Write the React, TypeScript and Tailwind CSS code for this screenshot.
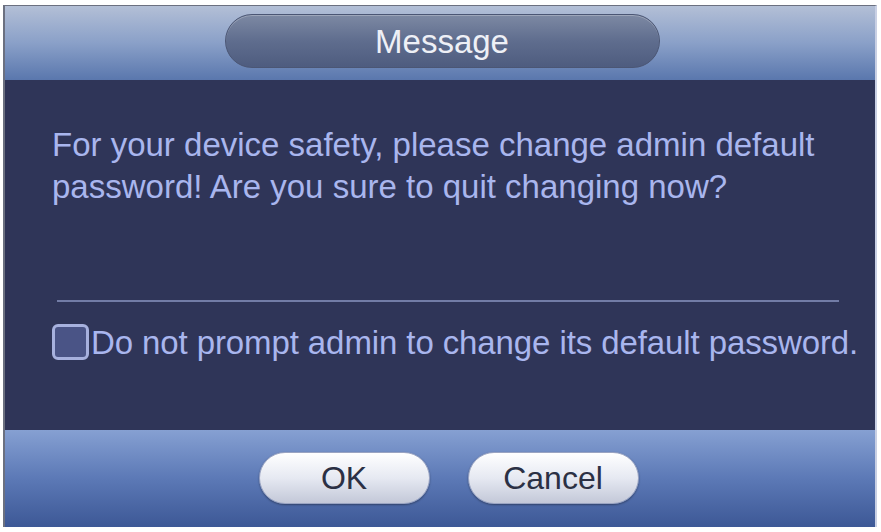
import React from "react";

export default function App() {
  return (
    <div className="w-[881px] h-[532px] bg-white pt-[5px] pl-[3px] overflow-hidden" style={{ fontFamily: '"Liberation Sans", Arial, sans-serif' }}>
      <div className="w-[874px] h-[522px] flex flex-col border-l-2 border-t border-[#6b7080] border-r-2 border-r-[#c9d0e4]">
        {/* Header */}
        <div className="h-[74px] bg-gradient-to-b from-[#b3bfd6] via-[#8aa0c8] to-[#5a77ad] flex justify-center pt-[8px]">
          <div className="ml-[4px] w-[435px] h-[54px] rounded-[27px] border border-[#4b5674] bg-gradient-to-b from-[#7d89a3] via-[#5f6d8e] to-[#4e5c7f] shadow-[inset_0_1px_0_rgba(255,255,255,0.25)] flex items-center justify-center">
            <span className="text-[#eef0f6] text-[33px] leading-none">Message</span>
          </div>
        </div>
        {/* Body */}
        <div className="h-[350px] bg-[#2f3558] flex flex-col pl-[47px] pr-[36px]">
          <p className="mt-[44px] text-[#a9b6ee] text-[33px] leading-[42px] whitespace-nowrap">
            For your device safety, please change admin default
            <br />
            password! Are you sure to quit changing now?
          </p>
          <div className="mt-[92px] ml-[5px] h-[2px] bg-[#727ca6]" />
          <div className="mt-[22px] flex items-center">
            <div className="w-[37px] h-[36px] rounded-[6px] border-[3px] border-[#a7b1de] bg-[#4a5486] shrink-0" />
            <span className="ml-[2px] text-[#a9b6ee] text-[33px] leading-none tracking-[-0.1px] whitespace-nowrap">
              Do not prompt admin to change its default password.
            </span>
          </div>
        </div>
        {/* Footer */}
        <div className="flex-1 bg-gradient-to-b from-[#86a0d2] via-[#5c79b6] to-[#3d5896] flex justify-center items-start pt-[22px] pl-[17px] gap-[38px]">
          <button className="w-[171px] h-[52px] rounded-[26px] bg-gradient-to-b from-[#ffffff] via-[#e6e9f2] to-[#c3c8d8] border border-[#9aa4c2] shadow-[0_1px_2px_rgba(0,0,0,0.35)] text-[#2b3044] text-[32px] leading-none">
            OK
          </button>
          <button className="w-[171px] h-[52px] rounded-[26px] bg-gradient-to-b from-[#ffffff] via-[#e6e9f2] to-[#c3c8d8] border border-[#9aa4c2] shadow-[0_1px_2px_rgba(0,0,0,0.35)] text-[#2b3044] text-[32px] leading-none">
            Cancel
          </button>
        </div>
      </div>
    </div>
  );
}
